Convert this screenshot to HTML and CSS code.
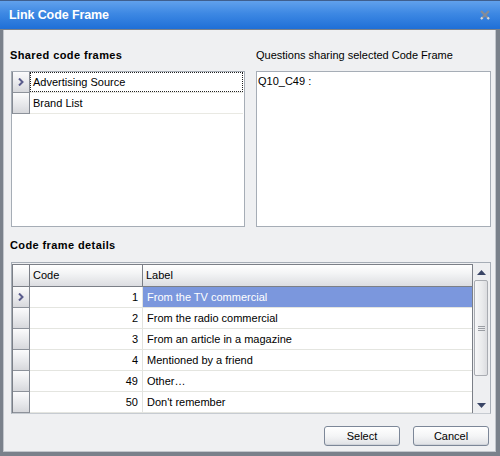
FILE: index.html
```html
<!DOCTYPE html>
<html>
<head>
<meta charset="utf-8">
<title>Link Code Frame</title>
<link rel="stylesheet" href="styles.css">
</head>
<body>
<div class="window">
  <div class="titlebar">
    <span class="title">Link Code Frame</span>
    <svg class="close" width="10" height="10" viewBox="0 0 10 10">
      <path d="M1 1 L9 9 M9 1 L1 9" stroke="#858c97" stroke-width="2.2" fill="none"/>
      <path d="M2.5 7.5 L1 9 M7.5 7.5 L9 9" stroke="#d4d9e0" stroke-width="2.2" fill="none"/>
    </svg>
  </div>
  <div class="body">
    <div class="top">
      <div class="panel">
        <div class="label bold">Shared code frames</div>
        <div class="box list">
          <div class="lrow">
            <div class="ind"><svg class="chev" width="6" height="8" viewBox="0 0 6 8"><path d="M1 0.5 L4.5 4 L1 7.5" stroke="#5a5c8c" stroke-width="2" fill="none"/></svg></div>
            <div class="lcell focus">Advertising Source</div>
          </div>
          <div class="lrow">
            <div class="ind"></div>
            <div class="lcell">Brand List</div>
          </div>
        </div>
      </div>
      <div class="panel">
        <div class="label">Questions sharing selected Code Frame</div>
        <div class="box memo">Q10_C49 :</div>
      </div>
    </div>
    <div class="label bold details">Code frame details</div>
    <div class="grid">
      <div class="gridmain">
        <div class="ghead">
          <div class="ind"></div>
          <div class="gcode">Code</div>
          <div class="glabel">Label</div>
        </div>
        <div class="grow">
          <div class="ind"><svg class="chev" width="6" height="8" viewBox="0 0 6 8"><path d="M1 0.5 L4.5 4 L1 7.5" stroke="#5a5c8c" stroke-width="2" fill="none"/></svg></div>
          <div class="gcode">1</div>
          <div class="glabel selected">From the TV commercial</div>
        </div>
        <div class="grow">
          <div class="ind"></div>
          <div class="gcode">2</div>
          <div class="glabel">From the radio commercial</div>
        </div>
        <div class="grow">
          <div class="ind"></div>
          <div class="gcode">3</div>
          <div class="glabel">From an article in a magazine</div>
        </div>
        <div class="grow">
          <div class="ind"></div>
          <div class="gcode">4</div>
          <div class="glabel">Mentioned by a friend</div>
        </div>
        <div class="grow">
          <div class="ind"></div>
          <div class="gcode">49</div>
          <div class="glabel">Other…</div>
        </div>
        <div class="grow">
          <div class="ind"></div>
          <div class="gcode">50</div>
          <div class="glabel">Don't remember</div>
        </div>
      </div>
      <div class="vscroll">
        <div class="sbtn"><svg width="9" height="5" viewBox="0 0 9 5"><path d="M4.5 0 L9 5 L0 5 Z" fill="#3a4566"/></svg></div>
        <div class="track">
          <div class="thumb">
            <div class="grip"></div>
          </div>
        </div>
        <div class="sbtn"><svg width="9" height="5" viewBox="0 0 9 5"><path d="M0 0 L9 0 L4.5 5 Z" fill="#3a4566"/></svg></div>
      </div>
    </div>
    <div class="buttons">
      <button class="btn">Select</button>
      <button class="btn">Cancel</button>
    </div>
  </div>
</div>
</body>
</html>
```

FILE: styles.css
```css
html, body {
  margin: 0;
  padding: 0;
}
body {
  font-family: "Liberation Sans", Arial, sans-serif;
  font-size: 11px;
  color: #000;
  background: #eff0f2;
}
.window {
  width: 500px;
  height: 456px;
  display: flex;
  flex-direction: column;
  box-sizing: border-box;
}
.titlebar {
  height: 29px;
  flex: none;
  box-sizing: border-box;
  border-top: 1px solid #3f5f8e;
  background: linear-gradient(#61a1ec, #3d88e3 45%, #1f6fd7);
  display: flex;
  align-items: center;
  padding: 0 10px 1px 9px;
  color: #fff;
}
.title {
  flex: 1;
  font-weight: bold;
  font-size: 12.5px;
  letter-spacing: -0.1px;
}
.close {
  display: block;
}
.body {
  flex: 1;
  display: flex;
  flex-direction: column;
  background: #eff0f2;
  border-style: solid;
  border-color: #7a818b;
  border-width: 1px 4px 4px 3px;
  box-shadow: inset 1px 0 0 #c2c6cc, inset -1px 0 0 #c2c6cc, inset 0 -1px 0 #c2c6cc;
  padding: 17px 5px 0 8px;
  box-sizing: border-box;
}
.top {
  display: flex;
  gap: 11px;
}
.panel {
  display: flex;
  flex-direction: column;
}
.panel:first-child {
  width: 234px;
}
.panel:last-child {
  width: 235px;
}
.label {
  height: 16px;
  line-height: 16px;
  margin-bottom: 8px;
  white-space: nowrap;
}
.bold {
  font-weight: bold;
  letter-spacing: 0.4px;
  margin-left: -1px;
}
.box {
  height: 156px;
  box-sizing: border-box;
  background: #fff;
  border: 1px solid #a6adb6;
}
.list {
  padding: 0 1px 0 0;
}
.lrow {
  display: flex;
  height: 21px;
  box-sizing: border-box;
  border-bottom: 1px solid #e9e9e3;
}
.ind {
  width: 16px;
  flex: none;
  background: linear-gradient(#fbfbfc, #e6e7ea 60%, #d7d8dc);
  border-left: 1px solid #858a93;
  border-right: 1px solid #858a93;
  box-sizing: content-box;
  display: flex;
  align-items: center;
  justify-content: center;
}
.lrow .ind {
  border-bottom: 1px solid #8d929a;
  margin-bottom: -1px;
}
.lcell {
  flex: 1;
  line-height: 19px;
  padding: 0 2px;
  box-sizing: border-box;
  border: 1px solid transparent;
}
.lcell.focus {
  border: 1px dotted #222;
}
.memo {
  padding: 2px 1px;
  line-height: 14px;
}
.details {
  margin-top: 10px;
  margin-bottom: 9px;
}
.grid {
  display: flex;
  height: 152px;
  box-sizing: border-box;
  border: 1px solid #a6adb6;
  border-bottom-color: #c6cbd1;
  padding: 1px 1px 0 0;
  width: 480px;
}
.gridmain {
  width: 461px;
  box-sizing: border-box;
  border: 1px solid #7b7f87;
  border-bottom: none;
  background: #fff;
  display: flex;
  flex-direction: column;
}
.ghead {
  display: flex;
  height: 22px;
  box-sizing: border-box;
  border-bottom: 1px solid #7b7f87;
  background: linear-gradient(#ffffff, #f3f4f5 40%, #dcdde1);
  line-height: 21px;
}
.ghead .ind {
  border-left: none;
  background: none;
  border-right-color: #7b7f87;
}
.gcode {
  width: 113px;
  flex: none;
  box-sizing: border-box;
  text-align: right;
  padding-right: 4px;
  border-right: 1px solid #e2e3e0;
}
.ghead .gcode {
  text-align: left;
  padding: 0 0 0 3px;
  border-right-color: #7b7f87;
}
.glabel {
  flex: 1;
  box-sizing: border-box;
  padding-left: 4px;
  white-space: nowrap;
}
.ghead .glabel {
  padding-left: 3px;
}
.grow {
  display: flex;
  height: 21px;
  box-sizing: border-box;
  border-bottom: 1px solid #e4e5e0;
  line-height: 20px;
}
.grow .ind {
  border-left: none;
  border-bottom: 1px solid #8d929a;
  margin-bottom: -1px;
}
.selected {
  background: #7b97dd;
  color: #fff;
}
.vscroll {
  width: 16px;
  flex: none;
  display: flex;
  flex-direction: column;
  background: #eeeff1;
}
.sbtn {
  height: 16px;
  flex: none;
  display: flex;
  align-items: center;
  justify-content: center;
}
.sbtn svg {
  display: block;
}
.track {
  flex: 1;
  padding: 0 1px;
}
.thumb {
  height: 96px;
  box-sizing: border-box;
  border: 1px solid #a9acb2;
  border-radius: 2px;
  background: linear-gradient(90deg, #f7f7f8, #e9eaec 60%, #dcdde0);
  display: flex;
  align-items: center;
  justify-content: center;
}
.grip {
  width: 7px;
  height: 5px;
  background: linear-gradient(#9a9da3 0, #9a9da3 1px, transparent 1px, transparent 2px, #9a9da3 2px, #9a9da3 3px, transparent 3px, transparent 4px, #9a9da3 4px, #9a9da3 5px);
}
.buttons {
  display: flex;
  justify-content: flex-end;
  gap: 13px;
  margin-top: 12px;
  padding-right: 2px;
}
.btn {
  width: 76px;
  height: 20px;
  margin: 0;
  padding: 0;
  font-family: "Liberation Sans", Arial, sans-serif;
  font-size: 11px;
  color: #000;
  border: 1px solid #7c8798;
  border-radius: 3px;
  background: linear-gradient(#ffffff, #f4f5f6 50%, #dfe1e5);
  box-shadow: inset 0 -1px 0 #d0d4da;
}
```
